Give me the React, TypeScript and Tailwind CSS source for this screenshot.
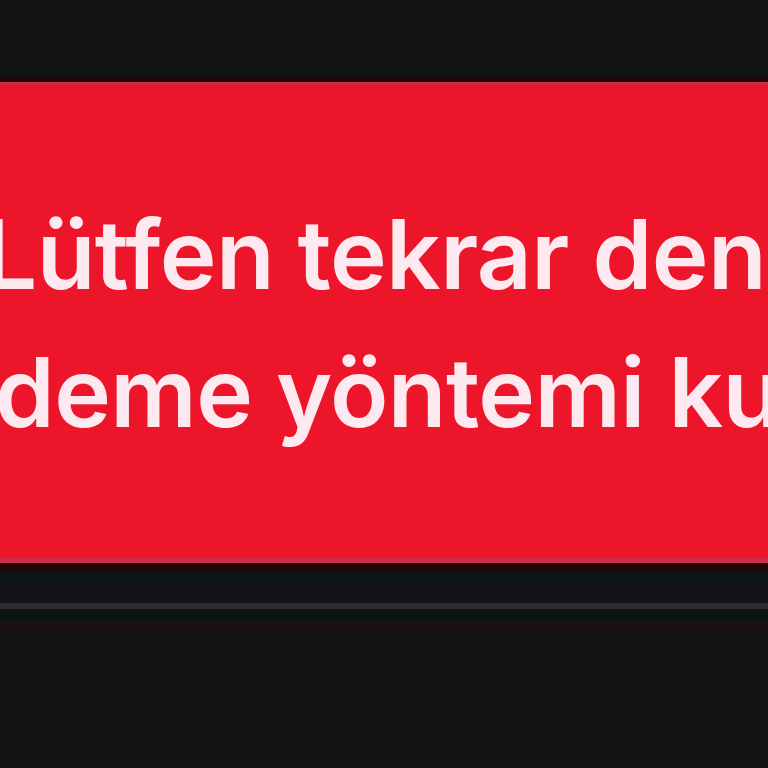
export default function App() {
  return (
    <div className="w-[768px] h-[768px] overflow-hidden bg-[#141414] flex flex-col" style={{ fontFamily: "Inter, 'Noto Sans', sans-serif" }}>
      <div className="h-[82px] bg-[#111315] border-b-[5px] border-[#230306]"></div>
      <div className="border-t-[3px] border-[#d02a42] bg-[#ec1529] h-[476px] flex flex-col pt-[100px] overflow-hidden">
        <p className="whitespace-nowrap text-[96px] leading-[138px] font-semibold tracking-[-0.6px] text-[#fde9ef] -ml-[17px]">
          {" "}Lütfen tekrar deneyin veya
        </p>
        <p className="whitespace-nowrap text-[96px] leading-[138px] font-semibold tracking-[-0.6px] text-[#fde9ef] -ml-[63px]">
          ödeme yöntemi kullanın.
        </p>
      </div>
      <div className="h-[5px] bg-[#c8304a]"></div>
      <div className="h-[8px] bg-[#230306]"></div>
      <div className="h-[12px] bg-[#0c1513]"></div>
      <div className="h-[20px] bg-[#131219]"></div>
      <div className="h-[6px] bg-[#2a2c30]"></div>
      <div className="h-[12px] bg-[#0c1411]"></div>
      <div className="h-[10px] bg-[#1a1212]"></div>
      <div className="flex-1 bg-[#141414]"></div>
    </div>
  );
}
